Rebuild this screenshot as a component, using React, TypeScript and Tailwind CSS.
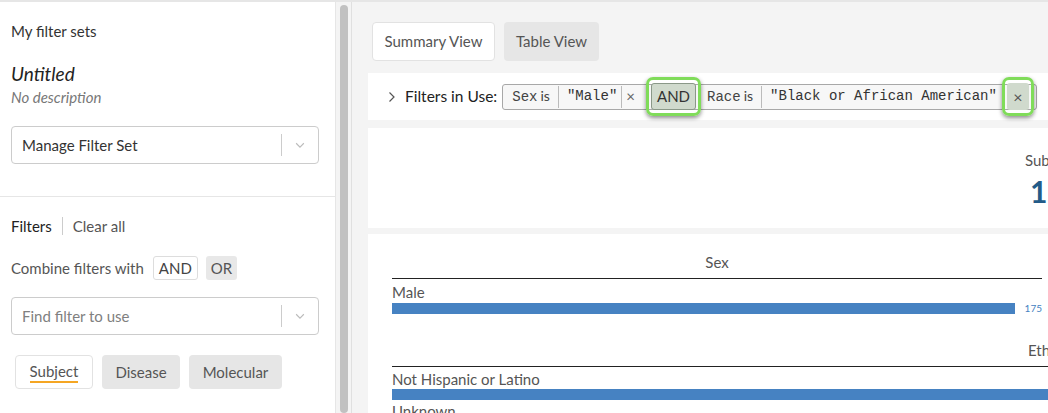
import React from "react";

const sans = { fontFamily: "Lato, 'Open Sans', sans-serif" };
const mono = { fontFamily: "'Liberation Mono', monospace" };

function Chevron() {
  return (
    <svg width="14" height="14" viewBox="0 0 20 20" className="text-[#bbb]">
      <path d="M4.5 7.5 L10 13 L15.5 7.5" fill="none" stroke="currentColor" strokeWidth="1.6" />
    </svg>
  );
}

function Select({ label, muted }: { label: string; muted?: boolean }) {
  return (
    <div className="ml-[11px] mr-[16px] flex h-[38px] items-center rounded border border-[#ccc] bg-white">
      <div className={`flex-1 pl-[10px] text-[15px] ${muted ? "text-[#808080]" : "text-[#333]"}`}>{label}</div>
      <div className="h-[22px] w-px bg-[#ccc]" />
      <div className="flex w-[36px] justify-center">
        <Chevron />
      </div>
    </div>
  );
}

function Highlight({ children }: { children: React.ReactNode }) {
  return (
    <span className="mx-[2px] flex h-[39px] items-center rounded-[7px] border-[3px] border-[#80dc5a] p-[2px] shadow-[0_2px_4px_rgba(0,0,0,0.45)]">
      {children}
    </span>
  );
}

export default function App() {
  return (
    <div className="flex h-[413px] w-[1048px] overflow-hidden border-t-2 border-[#e6e6e6] bg-[#f4f4f4] text-[#333]" style={sans}>
      {/* Sidebar */}
      <div className="flex w-[336px] shrink-0 flex-col border-r border-[#e6e6e6] bg-white">
        <div className="mt-[19px] px-[11px] text-[15px] leading-[20px]">My filter sets</div>
        <div className="mt-[21px] px-[11px] text-[19px] italic leading-[24px] text-[#222]">Untitled</div>
        <div className="mt-[1px] px-[11px] text-[15px] italic leading-[20px] text-[#777]">No description</div>
        <div className="mt-[19px]">
          <Select label="Manage Filter Set" />
        </div>
        <div className="mt-[32px] h-px shrink-0 bg-[#e6e6e6]" />
        <div className="mt-[19px] flex items-center px-[11px] text-[15px] leading-[20px]">
          <span className="text-[#222]">Filters</span>
          <span className="mx-[10px] h-[18px] w-px bg-[#ccc]" />
          <span className="text-[#555]">Clear all</span>
        </div>
        <div className="mt-[20px] flex h-[24px] items-center px-[11px] text-[15px] text-[#555]">
          <span>Combine filters with</span>
          <span className="ml-[9px] flex h-[24px] items-center rounded-[3px] border border-[#ddd] bg-white px-[5px] text-[#444]">AND</span>
          <span className="ml-[8px] flex h-[24px] items-center rounded-[3px] bg-[#e8e8e8] px-[5px] text-[#555]">OR</span>
        </div>
        <div className="mt-[17px]">
          <Select label="Find filter to use" muted />
        </div>
        <div className="mt-[20px] flex gap-[9px] px-[15px] text-[15px]">
          <div className="flex h-[34px] w-[78px] items-center justify-center rounded border border-[#e2e2e2] bg-white text-[#555]">
            <span className="border-b-2 border-[#f5a623] leading-[20px]">Subject</span>
          </div>
          <div className="flex h-[34px] w-[78px] items-center justify-center rounded bg-[#e6e6e6] text-[#555]">Disease</div>
          <div className="flex h-[34px] w-[93px] items-center justify-center rounded bg-[#e6e6e6] text-[#555]">Molecular</div>
        </div>
      </div>

      {/* Scrollbar */}
      <div className="flex w-[16px] shrink-0 justify-center border-r border-[#e0e0e0] bg-[#f4f4f4] pt-[3px]">
        <div className="h-full w-[8px] rounded-full bg-[#c1c1c1]" />
      </div>

      {/* Main */}
      <div className="flex min-w-0 flex-1 flex-col overflow-hidden pl-[16px] pt-[20px]">
        <div className="ml-[4px] flex shrink-0 gap-[9px] text-[15px]">
          <div className="flex h-[39px] w-[123px] items-center justify-center whitespace-nowrap rounded border border-[#e2e2e2] bg-white text-[#555]">Summary View</div>
          <div className="flex h-[39px] w-[95px] items-center justify-center whitespace-nowrap rounded bg-[#e6e6e6] text-[#555]">Table View</div>
        </div>

        <div className="mt-[12px] flex h-[47px] w-[700px] shrink-0 items-center bg-white pl-[19px]">
          <svg width="10" height="12" viewBox="0 0 10 12" className="mr-[8px] text-[#555]">
            <path d="M2.5 1.5 L7 6 L2.5 10.5" fill="none" stroke="currentColor" strokeWidth="1.2" />
          </svg>
          <span className="text-[15.5px] text-[#222]">Filters in Use:</span>
          <div className="ml-[5px] flex h-[26px] items-center whitespace-nowrap rounded-[3px] border border-[#a8a8a8] bg-[#f7f7f7] pl-[9px] text-[#444]">
            <span className="text-[14px]">
              <span style={mono}>Sex</span>
              <span className="ml-[3px]">is</span>
            </span>
            <span className="mx-[8px] h-[22px] w-px bg-[#bbb]" />
            <span className="text-[14px] text-[#333]" style={mono}>"Male"</span>
            <span className="mx-[4px] h-[22px] w-px bg-[#bbb]" />
            <span className="mr-[9px] text-[15px] text-[#666]">×</span>
            <Highlight>
              <span className="flex h-[27px] items-center rounded-[3px] border border-[#8a9888] bg-[#d0dacd] px-[5px] text-[15px] text-[#333]">AND</span>
            </Highlight>
            <span className="ml-[4px] text-[14px]">
              <span style={mono}>Race</span>
              <span className="ml-[3px]">is</span>
            </span>
            <span className="mx-[8px] h-[22px] w-px bg-[#bbb]" />
            <span className="text-[14px] text-[#333]" style={mono}>"Black or African American"</span>
            <span className="ml-[3px]" />
            <Highlight>
              <span className="flex h-[27px] w-[22px] items-center justify-center rounded-[3px] bg-[#d0dacd] text-[16px] text-[#555]">×</span>
            </Highlight>
          </div>
        </div>

        <div className="mt-[8px] flex h-[100px] w-[700px] shrink-0 bg-white pl-[657px] pt-[22px]">
          <div className="flex flex-col whitespace-nowrap">
            <span className="text-[15px] leading-[20px] text-[#555]">Subjects</span>
            <span className="mt-[3px] pl-[5px] text-[30px] font-bold leading-[36px] text-[#235b88]">175</span>
          </div>
        </div>

        <div className="mt-[6px] w-[700px] shrink-0 bg-white pl-[24px] pt-[18px] pb-[40px]">
          <div className="w-[650px]">
            <div className="text-center text-[15px] leading-[20px] text-[#555]">Sex</div>
            <div className="mt-[6px] h-px bg-[#222]" />
            <div className="mt-[4px] text-[15px] leading-[18px] text-[#555]">Male</div>
            <div className="mt-[1px] flex items-center">
              <div className="h-[11px] w-[624px] bg-[#4682c2]" />
              <span className="ml-[10px] text-[10px] leading-[12px] text-[#4682c2]">175</span>
            </div>
          </div>
          <div className="w-[1330px]">
            <div className="mt-[26px] text-center text-[15px] leading-[20px] text-[#555]">Ethnicity</div>
            <div className="mt-[6px] h-px bg-[#222]" />
            <div className="mt-[3px] text-[15px] leading-[18px] text-[#555]">Not Hispanic or Latino</div>
            <div className="mt-[1px] h-[11px] w-[1300px] bg-[#4682c2]" />
            <div className="mt-[2px] text-[15px] leading-[18px] text-[#555]">Unknown</div>
          </div>
        </div>
      </div>
    </div>
  );
}
